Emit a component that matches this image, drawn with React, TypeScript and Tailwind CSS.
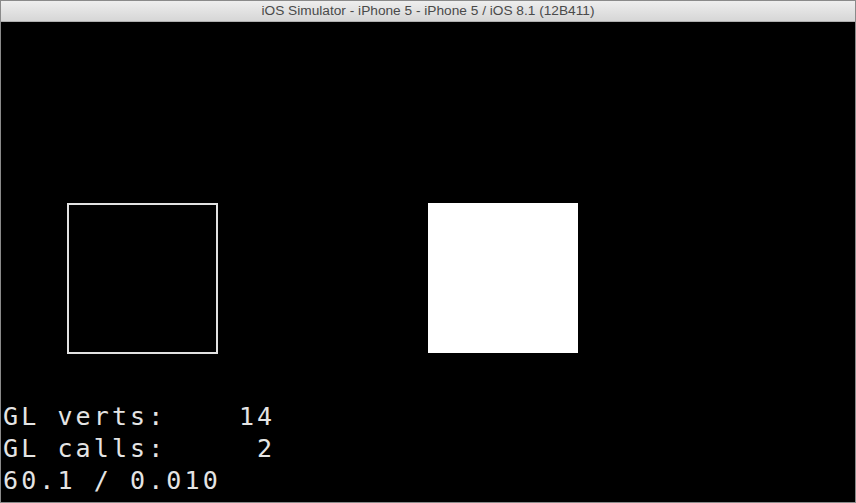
import React from 'react';

const statLines = ['GL verts:    14', 'GL calls:     2', '60.1 / 0.010'];

export default function App() {
  return (
    <div className="w-[856px] h-[503px] flex flex-col bg-[#d8d8d8] border border-[#8a8a8a] overflow-hidden">
      {/* window title bar */}
      <div className="h-[21px] shrink-0 flex items-center justify-center bg-gradient-to-b from-[#eeeeee] to-[#d6d6d6] border-b border-[#b0b0b0]">
        <span className="text-[13.7px] text-[#4a4a4a] font-['Liberation_Sans',Arial,sans-serif] leading-none">
          iOS Simulator - iPhone 5 - iPhone 5 / iOS 8.1 (12B411)
        </span>
      </div>

      {/* simulator screen */}
      <div className="flex-1 bg-black flex flex-col pl-[1px]">
        <div className="flex flex-row mt-[181px] ml-[65px] gap-[210px]">
          <div className="w-[151px] h-[151px] border-2 border-[#e2e2e2]" />
          <div className="w-[150px] h-[150px] bg-white" />
        </div>

        <div className="mt-[47px] ml-[1px] font-['DejaVu_Sans_Mono',monospace] text-[25px] leading-[32px] tracking-[3.1px] text-[#e4e4e4] whitespace-pre">
          {statLines.map((line) => (
            <div key={line}>{line}</div>
          ))}
        </div>
      </div>
    </div>
  );
}
